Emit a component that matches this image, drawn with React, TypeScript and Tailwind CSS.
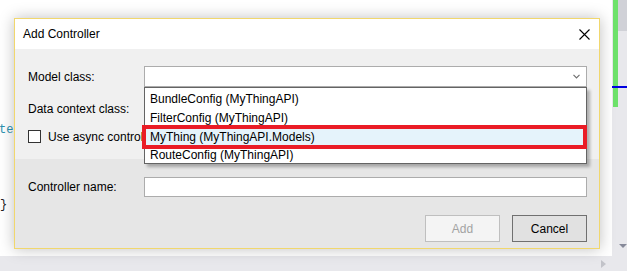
import React from "react";

const font = { fontFamily: '"Segoe UI", "Liberation Sans", Arial, sans-serif' };

function CloseIcon() {
  return (
    <svg width="11" height="11" viewBox="0 0 11 11" className="shrink-0">
      <path d="M0.5 0.5 L10.5 10.5 M10.5 0.5 L0.5 10.5" stroke="#000" strokeWidth="1.1" />
    </svg>
  );
}

function Chevron() {
  return (
    <svg width="7" height="5" viewBox="0 0 7 5">
      <path d="M0.5 0.8 L3.5 3.8 L6.5 0.8" stroke="#707070" strokeWidth="1.2" fill="none" />
    </svg>
  );
}

const items = [
  "BundleConfig (MyThingAPI)",
  "FilterConfig (MyThingAPI)",
  "MyThing (MyThingAPI.Models)",
  "RouteConfig (MyThingAPI)",
];

export default function App() {
  return (
    <div className="relative w-[627px] h-[271px] overflow-hidden bg-white flex flex-col text-[12px] text-black" style={font}>
      {/* editor behind the dialog */}
      <div className="flex flex-1 min-h-0">
        <div className="flex-1 flex flex-col font-['Liberation_Mono',monospace] text-[12px] leading-[16px]">
          <div className="mt-[122px] h-[16px] text-[#2b91af] -ml-[1px]">te</div>
          <div className="mt-[59px] h-[16px] text-[#222]">{"}"}</div>
        </div>
        <div className="relative w-[15px] bg-[#e8e8ec] flex">
          <div className="w-[1px]" />
          <div className="w-[5px] h-[107px] bg-[#6ee26b]" />
          <div className="flex-1 flex flex-col">
            <div className="h-[31px] bg-[#d0d1d7]" />
            <div className="flex-1" />
            <div className="flex justify-center mb-[8px] pl-[1px]">
              <div className="w-0 h-0 border-l-[4px] border-r-[4px] border-t-[4px] border-l-transparent border-r-transparent border-t-[#868999]" />
            </div>
          </div>
          <div className="absolute left-0 right-0 top-[86px] h-[2px] bg-[#0000e0]" />
        </div>
      </div>
      <div className="h-[15px] bg-[#e8e8ec] flex justify-end items-center pr-[21px]">
        <div className="w-0 h-0 border-t-[4px] border-b-[4px] border-l-[5px] border-t-transparent border-b-transparent border-l-[#c2c3c9]" />
      </div>

      {/* Add Controller dialog */}
      <div className="absolute left-[14px] top-[18px] w-[586px] h-[231px] border border-[#f1d76d] bg-[#f0f0f0] shadow-[0_0_14px_rgba(0,0,0,0.25)] flex flex-col">
        <div className="h-[30px] bg-white flex items-center justify-between pl-[8px] pr-[9px]">
          <span>Add Controller</span>
          <CloseIcon />
        </div>

        <div className="h-[110px] pl-[13px] pr-[12px] pt-[17px] flex flex-col">
          <div className="flex items-center h-[21px]">
            <span className="w-[116px]">Model class:</span>
            <div className="flex-1 h-[21px] bg-white border border-[#acacac] flex items-center justify-end pr-[6px]">
              <Chevron />
            </div>
          </div>
          <div className="flex items-center h-[21px] mt-[11px]">
            <span className="w-[116px]">Data context class:</span>
            <div className="flex-1 h-[21px] bg-white border border-[#acacac]" />
          </div>
          <div className="flex items-center h-[13px] mt-[11px] gap-[7px]">
            <div className="w-[13px] h-[13px] bg-white border border-[#333]" />
            <span className="w-[95px] overflow-hidden whitespace-nowrap">Use async controller actions</span>
          </div>
        </div>

        <div className="flex-1 bg-[#e6e6e6] pl-[13px] pr-[12px] pt-[18px] flex flex-col">
          <div className="flex items-center h-[20px]">
            <span className="w-[116px]">Controller name:</span>
            <div className="flex-1 h-[20px] bg-white border border-[#acacac]" />
          </div>
          <div className="flex justify-end gap-[12px] mt-[18px]">
            <button className="w-[75px] h-[27px] bg-[#f4f4f4] border border-[#bfbfbf] text-[#a3a3a3]">Add</button>
            <button className="w-[75px] h-[27px] bg-[#e1e1e1] border border-[#707070]">Cancel</button>
          </div>
        </div>

        {/* open dropdown list */}
        <div className="absolute left-[129px] top-[68px] w-[443px] h-[77px] bg-white border border-[#646464] shadow-[3px_3px_3px_rgba(0,0,0,0.28)] pt-[1px] flex flex-col">
          {items.map((it, i) => (
            <div
              key={it}
              className={
                (i === 3 ? "h-[17px] " : "h-[19px] ") +
                "flex items-center pl-[5px] " +
                (i === 2 ? "bg-[#e5f3fb]" : "")
              }
            >
              {it}
            </div>
          ))}
        </div>

        {/* red highlight */}
        <div className="absolute left-[127px] top-[106px] w-[445px] h-[24px] border-4 border-[#ea1c26]" />
      </div>
    </div>
  );
}
